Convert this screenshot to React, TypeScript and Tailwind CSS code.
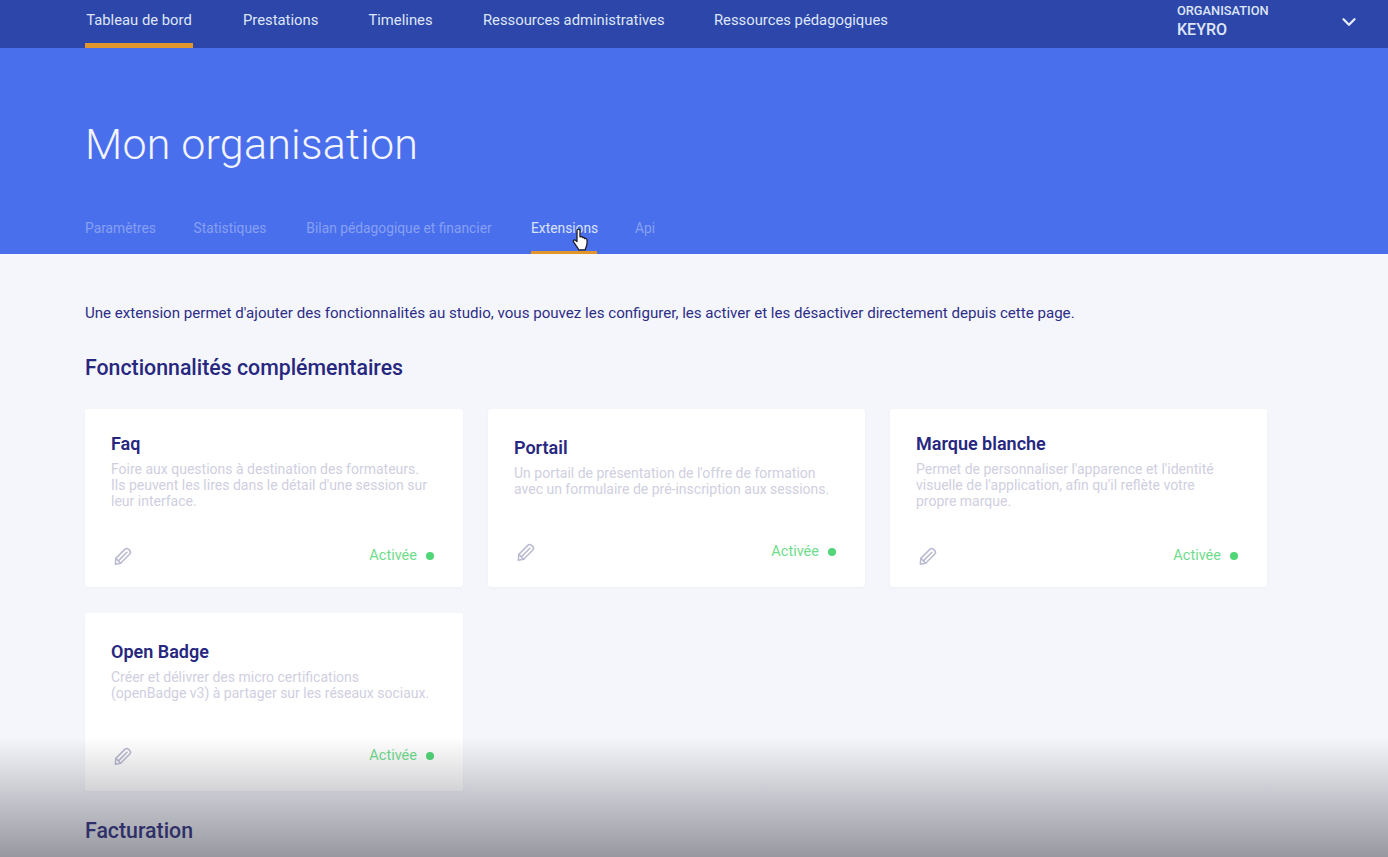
import { ChevronDown } from 'lucide-react';

const navItems = [
  { name: 'Tableau de bord', width: 'w-[108px]' },
  { name: 'Prestations', width: 'w-[75px]' },
  { name: 'Timelines', width: 'w-[65px]' },
  { name: 'Ressources administratives', width: 'w-[181px]' },
  { name: 'Ressources pédagogiques', width: 'w-[171px]' },
];

const tabs = [
  { name: 'Paramètres', width: 'w-[70px]' },
  { name: 'Statistiques', width: 'w-[74px]' },
  { name: 'Bilan pédagogique et financier', width: 'w-[188px]' },
  { name: 'Extensions', width: 'w-[66px]' },
  { name: 'Api', width: 'w-[20px]' },
];

const features = [
  {
    title: 'Faq',
    text: ['Foire aux questions à destination des formateurs.', "Ils peuvent les lires dans le détail d'une session sur", 'leur interface.'],
  },
  {
    title: 'Portail',
    text: ["Un portail de présentation de l'offre de formation", 'avec un formulaire de pré-inscription aux sessions.'],
  },
  {
    title: 'Marque blanche',
    text: ["Permet de personnaliser l'apparence et l'identité", "visuelle de l'application, afin qu'il reflète votre", 'propre marque.'],
  },
  {
    title: 'Open Badge',
    text: ['Créer et délivrer des micro certifications', '(openBadge v3) à partager sur les réseaux sociaux.'],
  },
];

function PencilIcon() {
  return (
    <svg width="20" height="20" viewBox="0 0 20 20" fill="none" stroke="#b9b9d2" strokeWidth="1.5" strokeLinejoin="round" strokeLinecap="round">
      <path d="M2.8 12.4 11.8 3.400a2.700 2.700 0 0 1 3.800 0l1 1a2.700 2.700 0 0 1 0 3.800l-9 9-5.300 1z" />
      <path d="M5.600 14.600 14 6.200" />
      <path d="M2.800 12.400l4.900 4.800" />
    </svg>
  );
}

function FeatureCard({ title, text }: { title: string; text: string[] }) {
  return (
    <div className="h-[178px] bg-white rounded-[3px] pl-[26px] pr-[25px] pt-[3px] flex flex-col justify-center shadow-[0_1px_3px_rgba(60,70,130,0.04)]">
      <h3 className="text-[18px] leading-[24px] font-semibold text-[#27277f]">{title}</h3>
      <p className="mt-[5px] min-h-[40px] text-[14px] leading-[16px] text-[#cfcfe0] whitespace-nowrap">
        {text.map((line) => (
          <span key={line} className="block">{line}</span>
        ))}
      </p>
      <div className="mt-[35px] pl-[2px] pr-[4px] h-[24px] flex items-center justify-between">
        <PencilIcon />
        <div className="flex items-center gap-[9px] text-[14.5px] text-[#6fdc8c]">
          <span>Activée</span>
          <span className="w-[8px] h-[8px] rounded-full bg-[#4fd676]" />
        </div>
      </div>
    </div>
  );
}

export default function App() {
  return (
    <div className="relative h-[857px] overflow-hidden bg-[#f4f6fb] font-['Roboto',sans-serif]">
      {/* Top nav */}
      <header className="h-[48px] bg-[#2c47a9] flex pl-[85px] pr-[28px]">
        <nav className="flex gap-[50px]">
          {navItems.map((item, i) => (
            <div
              key={item.name}
              className={`${item.width} h-[48px] pt-[10px] text-center whitespace-nowrap text-[14.8px] leading-[20px] text-[#dfe5f8] border-b-[5px] ${i === 0 ? 'border-[#e0962a]' : 'border-transparent'}`}
            >
              {item.name}
            </div>
          ))}
        </nav>
        <div className="ml-auto w-[183px] flex items-center justify-between">
          <div className="text-[#dfe5f8] font-medium">
            <div className="text-[12.8px] leading-[14px] mt-[-4px]">ORGANISATION</div>
            <div className="text-[16px] leading-[20px] mt-[2px]">KEYRO</div>
          </div>
          <ChevronDown size={22} strokeWidth={2.5} className="text-[#e8ecfa] mt-[-4px]" />
        </div>
      </header>

      {/* Hero */}
      <section className="h-[206px] bg-[#4a6fec] pl-[85px] flex flex-col">
        <h1 className="mt-[70px] text-[43px] leading-[52px] font-light tracking-[0.2px] text-[#f3f5fe]">Mon organisation</h1>
        <div className="mt-auto flex gap-[38px]">
          {tabs.map((tab) => (
            <div
              key={tab.name}
              className={`${tab.width} h-[42px] pt-[6px] text-center whitespace-nowrap text-[13.8px] leading-[20px] border-b-[3px] ${tab.name === 'Extensions' ? 'text-[#dbe3fb] border-[#e0962a]' : 'text-[#86a0f2] border-transparent'}`}
            >
              {tab.name}
            </div>
          ))}
        </div>
      </section>

      {/* Content */}
      <main className="pl-[85px] pt-[49px]">
        <p className="text-[15.1px] leading-[20px] text-[#2d2d86] whitespace-nowrap">
          Une extension permet d'ajouter des fonctionnalités au studio, vous pouvez les configurer, les activer et les désactiver directement depuis cette page.
        </p>
        <h2 className="mt-[30px] text-[21.3px] leading-[30px] font-medium text-[#27277f]">Fonctionnalités complémentaires</h2>
        <div className="mt-[26px] grid grid-cols-[378px_377px_377px] gap-x-[25px] gap-y-[26px]">
          {features.map((f) => (
            <FeatureCard key={f.title} title={f.title} text={f.text} />
          ))}
        </div>
        <h2 className="mt-[25px] text-[21.3px] leading-[30px] font-medium text-[#27277f]">Facturation</h2>
      </main>

      {/* Bottom fade over the page */}
      <div className="absolute left-0 right-0 bottom-0 h-[120px] bg-gradient-to-b from-transparent to-[rgba(60,60,70,0.5)]" />

      {/* Mouse cursor */}
      <svg className="absolute left-[572px] top-[228px]" width="18" height="24" viewBox="0 0 18 24" fill="#ffffff" stroke="#1c1c24" strokeWidth="1.3" strokeLinejoin="round">
        <path d="M5 2.600c0-2 3-2 3 0v6.200l1-.1c.9-.1 1.500.3 1.700.9 1-.3 1.800.1 2 .9 1.200-.3 2.200.3 2.300 1.500.2 2.400 0 5-.8 6.800-.5 1.200-.9 2-.9 3H6.600c-.3-1.400-1.300-2.600-2.500-4.200L1.700 14.200c-1.200-1.700.6-3 2-1.800L5 13.600z" />
      </svg>
    </div>
  );
}
